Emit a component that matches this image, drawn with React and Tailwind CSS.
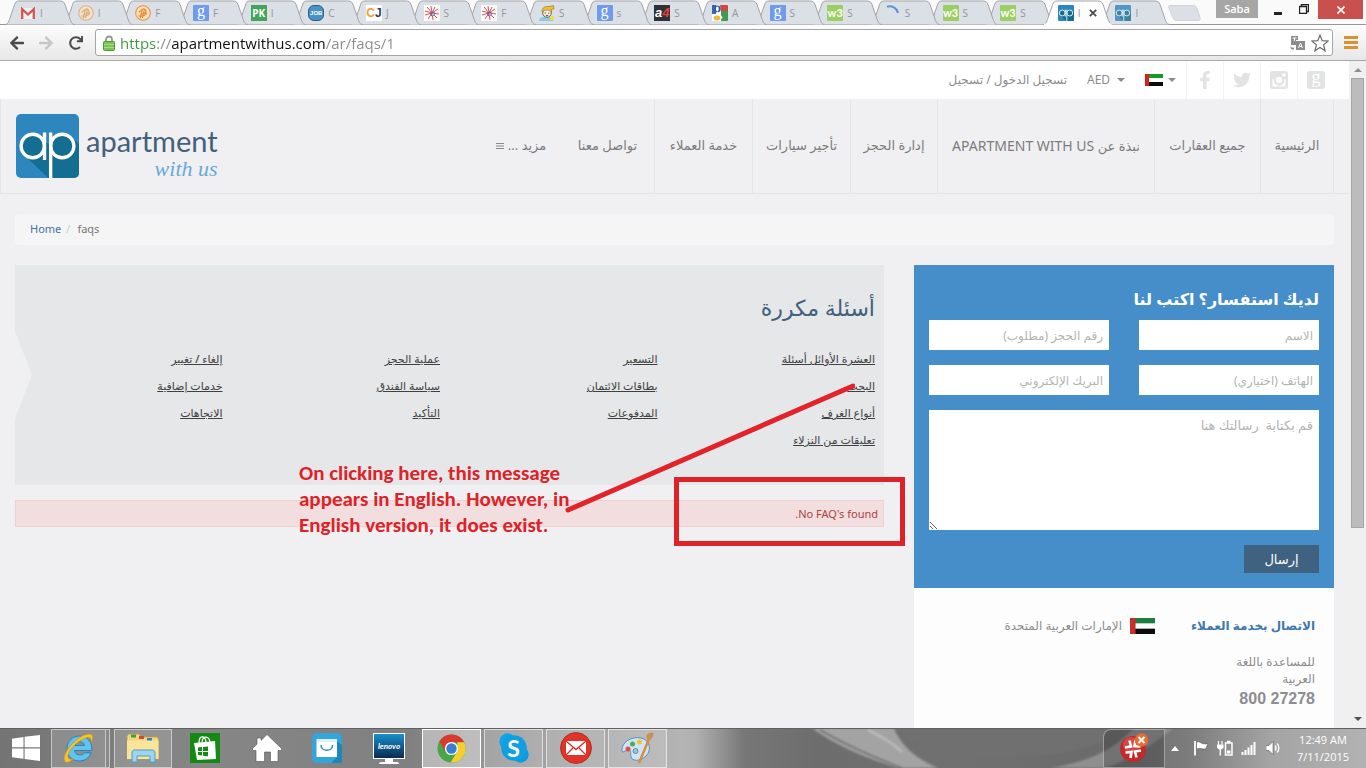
import React from "react";
import { FaFacebookF, FaTwitter, FaArrowLeft, FaArrowRight, FaRedo } from "react-icons/fa";

const sans = "font-['Noto_Sans','DejaVu_Sans',sans-serif]";

/* ---------- browser tabs ---------- */

function GoogleG() {
  return (
    <span className="block h-4 w-4 rounded-[1px] bg-[#6f9bea] text-center font-['Liberation_Serif',serif] text-[16px] leading-[11px] text-white">g</span>
  );
}
function Gmail() {
  return (
    <svg viewBox="0 0 16 16" className="h-4 w-4">
      <rect x="1" y="3" width="14" height="11" fill="#f2f2f2" />
      <path d="M2.2 14V4.2L8 9.5l5.8-5.3V14" fill="none" stroke="#d2574c" strokeWidth="2.3" />
    </svg>
  );
}
function Coin({ faded }) {
  return (
    <svg viewBox="0 0 16 16" className={faded ? "h-4 w-4 opacity-60" : "h-4 w-4"}>
      <circle cx="8" cy="8" r="7.3" fill="#fbe3c6" stroke="#e9953a" strokeWidth="1.1" />
      <path d="M5.300 13.300 7.400 4.200C11 3 12.600 7.600 8.600 9H5.200M3.600 7.200l5.200-3.800M7.400 12.800l2.200-9.200M3.400 10.800c3 1 6.400.2 8.600-2.800" fill="none" stroke="#e58a2c" strokeWidth="1.1" />
    </svg>
  );
}
function Pk() {
  return <span className="block h-4 w-4 bg-[#46a35a] text-center font-['Open_Sans',sans-serif] text-[10px] font-bold leading-4 text-white">PK</span>;
}
function Job() {
  return (
    <span className="block h-4 w-4 rounded-md border border-[#2b5f86] bg-[#4b92c4] text-center font-['Liberation_Sans',sans-serif] text-[6px] font-bold leading-[14px] text-white">JOB</span>
  );
}
function Cj() {
  return (
    <span className="block h-4 w-4 bg-white text-center font-['Liberation_Sans',sans-serif] text-[12px] font-bold leading-4 text-[#f0a032]">
      C<span className="text-[#2f3f63]">J</span>
    </span>
  );
}
function Burst() {
  return (
    <svg viewBox="0 0 16 16" className="h-4 w-4">
      <rect width="16" height="16" fill="#fdfafa" />
      <path d="M8 8 7 1M8 8l3-6M8 8l6-4M8 8l7 1M8 8l5 5M8 8l1 7M8 8l-4 6M8 8l-7 2M8 8 1 6M8 8 3 2" stroke="#e0555c" strokeWidth="1" />
      <circle cx="8.500" cy="9" r="2.400" fill="#8a5a86" />
      <circle cx="9" cy="9.500" r="1.200" fill="#9fc0dc" />
    </svg>
  );
}
function Kid() {
  return (
    <svg viewBox="0 0 16 16" className="h-4 w-4">
      <path d="M0 16c0-3 3-4.500 7-4.500s7 1.500 7 4.500z" fill="#8ccbe2" />
      <circle cx="8" cy="8" r="4.300" fill="#f7e9dc" stroke="#5b4a38" strokeWidth=".8" />
      <path d="M3 7C2.500 3 6 1 9 1.600l5.500-1L15 4l-3 .5c.6 1 .8 2 .6 2.600L10 5 5 5.500z" fill="#efc02f" stroke="#7c6327" strokeWidth=".5" />
      <path d="M6.200 7.500v1.200M9.800 7.500v1.200M6.800 10.600h2.400" stroke="#4a3a2b" strokeWidth=".9" />
      <path d="M12 11h3v4h-4z" fill="#f0e03a" />
    </svg>
  );
}
function A4() {
  return (
    <span className="block h-4 w-4 bg-[#2e3135] text-center font-['Liberation_Sans',sans-serif] text-[13px] font-bold italic leading-4 text-white">
      a<span className="text-[#e0403c]">4</span>
    </span>
  );
}
function GoogleColour() {
  return (
    <svg viewBox="0 0 16 16" className="h-4 w-4">
      <rect width="16" height="16" rx="1" fill="#fff" />
      <path d="M8 0h7a1 1 0 0 1 1 1v5H9z" fill="#d8443d" />
      <path d="M9 6h7v9a1 1 0 0 1-1 1H9z" fill="#3d9a57" />
      <path d="M0 0h4v9H0z" fill="#3a66b0" />
      <circle cx="5.300" cy="4" r="3.400" fill="#2f5ca8" />
      <ellipse cx="5.300" cy="4" rx="1.400" ry="2.400" fill="#fff" />
      <ellipse cx="5" cy="13" rx="3.400" ry="2.500" fill="#efb540" />
      <path d="M5 7.500c4 2 4 3 5 6" stroke="#fff" strokeWidth="1.600" fill="none" />
    </svg>
  );
}
function W3() {
  return <span className="block h-4 w-4 rounded-[1px] bg-[#9bcf63] text-center font-['Lato',sans-serif] text-[11px] font-bold leading-[15px] text-white">w3</span>;
}
function Spinner() {
  return (
    <svg viewBox="0 0 16 16" className="h-4 w-4">
      <path d="M2 1.800A8.500 8.500 0 0 1 13 8" fill="none" stroke="#5c93d3" strokeWidth="2" />
    </svg>
  );
}
function ApMark({ className }) {
  return (
    <svg viewBox="0 0 64 64" preserveAspectRatio="none" className={className}>
      <defs>
        <clipPath id="tile"><rect width="64" height="64" rx="5" /></clipPath>
      </defs>
      <g clipPath="url(#tile)">
        <rect width="64" height="64" fill="#2e86bf" />
        <path d="M8 41 33 64h31V30L54 21 34 30 16 24z" fill="#146e91" />
      </g>
      <circle cx="17" cy="32" r="11.800" fill="#146e91" stroke="#fff" strokeWidth="3.400" />
      <circle cx="47" cy="32" r="11.800" fill="#146e91" stroke="#fff" strokeWidth="3.400" />
      <path d="M29 18.500V46M35.200 18.500V64" stroke="#fff" strokeWidth="3.400" />
    </svg>
  );
}

const tabs = [
  { icon: <Gmail />, t: "I" },
  { icon: <Coin faded />, t: "I" },
  { icon: <Coin />, t: "F" },
  { icon: <GoogleG />, t: "F" },
  { icon: <Pk />, t: "I" },
  { icon: <Job />, t: "C" },
  { icon: <Cj />, t: "J" },
  { icon: <Burst />, t: "S" },
  { icon: <Burst />, t: "F" },
  { icon: <Kid />, t: "S" },
  { icon: <GoogleG />, t: "s" },
  { icon: <A4 />, t: "S" },
  { icon: <GoogleColour />, t: "A" },
  { icon: <GoogleG />, t: "S" },
  { icon: <W3 />, t: "S" },
  { icon: <Spinner />, t: "S" },
  { icon: <W3 />, t: "S" },
  { icon: <W3 />, t: "S" },
  { icon: <ApMark className="h-4 w-4" />, t: "I", active: true },
  { icon: <ApMark className="h-4 w-4 opacity-80" />, t: "I" },
];

function Tab({ tab, index }) {
  return (
    <div className="relative h-[25px] min-w-0 flex-1" style={{ zIndex: tab.active ? 40 : 30 - index }}>
      <svg viewBox="0 0 70 25" preserveAspectRatio="none" className="absolute inset-y-0 -left-2 h-[25px] w-[calc(100%+12px)]">
        <path
          d="M0 24.500C3 24.500 3.500 22 4.500 19.500L9.500 5C10.500 2 11.500 1 14 1H55C58 1 59.500 2 60.500 5L65.500 19.500C66.500 22 67 24.500 70 24.500"
          fill={tab.active ? "#fdfdfd" : "#dbdfe6"}
          stroke="#a2a4a8"
        />
        {tab.active && <path d="M1 24.500h68" stroke="#fdfdfd" strokeWidth="2" />}
      </svg>
      <div className="relative flex items-center pl-[7px] pt-[5px]">
        <span className="shrink-0">{tab.icon}</span>
        <span className="ml-1 min-w-[5px] font-['Open_Sans',sans-serif] text-[10px] leading-4 text-[#94969b]">{tab.t}</span>
        {tab.active && (
          <button aria-label="Close tab" className="ml-1.5">
            <svg viewBox="0 0 8 8" className="h-2 w-2"><path d="m.8.8 6.400 6.400M7.200.8.8 7.200" stroke="#4a4a4a" strokeWidth="1.800" /></svg>
          </button>
        )}
      </div>
    </div>
  );
}

function TabStrip() {
  return (
    <div className="flex h-[25px] shrink-0 border-b border-[#979797] bg-[#fafafa]">
      <div className="flex min-w-0 flex-1 pl-[13px]">
        {tabs.map((t, i) => <Tab key={i} tab={t} index={i} />)}
      </div>
      <div className="flex w-[200px] shrink-0 items-start">
        <button aria-label="New tab" className="ml-0.5 mt-[5px]">
          <svg viewBox="0 0 33 16" className="h-4 w-[33px]"><path d="M2 .5h23c2 0 3 .5 4 3l3 9c.6 2 0 3-2 3H9c-2 0-3-.5-4-3L1 3.500C.3 1.500.6.500 2 .500z" fill="#dcdfe5" stroke="#cfd2d7" /></svg>
        </button>
        <button className="ml-[15px] h-[18px] w-[42px] bg-[#a6a6a6] font-['Open_Sans',sans-serif] text-[11px] font-semibold leading-[18px] text-white">Saba</button>
        <button aria-label="Minimize" className="ml-4 h-[18px] w-2 pt-2"><span className="block h-[3px] bg-[#222]" /></button>
        <button aria-label="Restore" className="ml-[17px] h-[18px] w-2.5">
          <svg viewBox="0 0 10 10" className="h-2.5 w-2.5"><path d="M.5 2.500h7v7h-7zM2.500 2.500v-2h7v7h-2" fill="none" stroke="#222" strokeWidth="1.300" /></svg>
        </button>
        <button aria-label="Close window" className="ml-[9px] flex h-[19px] w-[45px] items-center justify-center bg-[#c8504f]">
          <svg viewBox="0 0 8 8" className="h-2 w-2"><path d="m.5.5 7 7M7.500.5l-7 7" stroke="#fff" strokeWidth="1.600" /></svg>
        </button>
      </div>
    </div>
  );
}

function Toolbar() {
  return (
    <div className="flex h-9 shrink-0 items-center border-b border-[#a8a8a8] bg-gradient-to-b from-[#fdfdfd] to-[#e7e7e7] pl-[9px] pr-2">
      <button aria-label="Back"><FaArrowLeft className="h-4 w-4 text-[#4a4a4a]" /></button>
      <button aria-label="Forward" className="ml-[13px]"><FaArrowRight className="h-4 w-4 text-[#c6c6c6]" /></button>
      <button aria-label="Reload" className="ml-[15px]"><FaRedo className="h-3.5 w-3.5 text-[#4a4a4a]" /></button>
      <div className="ml-3 flex h-[27px] min-w-0 flex-1 items-center rounded-[3px] border border-[#a5a5a5] bg-white pl-[7px] pr-[3px]">
        <svg viewBox="0 0 12 16" className="h-4 w-3 shrink-0">
          <path d="M3 8V4.500a3 3 0 0 1 6 0V8" fill="none" stroke="#8f9a8a" strokeWidth="1.800" />
          <rect x=".5" y="6.500" width="11" height="9" rx="1" fill="#7cc355" stroke="#4e9a33" />
          <path d="M1 9.500h10M1 12.500h10" stroke="#a5dc83" />
        </svg>
        <input
          aria-label="Address"
          defaultValue="https://apartmentwithus.com/ar/faqs/1"
          className="ml-[5px] min-w-0 flex-1 bg-[linear-gradient(90deg,#3c963f_0_37px,#8a8a8a_37px_52px,#111_52px_205px,#8a8a8a_205px)] bg-clip-text font-['Open_Sans',sans-serif] text-[15px] leading-6 text-transparent outline-none"
        />
        <svg viewBox="0 0 15 14" className="h-3.5 w-[15px] shrink-0">
          <path d="M1 0h7v4H6v5H1z" fill="#8d8d8d" />
          <rect x="6" y="5" width="9" height="9" fill="#8d8d8d" />
          <path d="m8.500 12 2-5 2 5M9.200 10.500h2.600" stroke="#fff" fill="none" />
          <path d="M2.500 2h4M4.500 2v3" stroke="#fff" />
          <path d="M1 10.500v2h3M2.500 11.500l1.500 1-1.500 1.200" stroke="#8d8d8d" fill="none" />
        </svg>
        <svg viewBox="0 0 18 18" className="ml-1.5 h-[18px] w-[18px] shrink-0">
          <path d="m9 1 2.200 5.600 6 .4-4.600 3.900 1.500 5.900L9 13.500l-5.100 3.300 1.500-5.900L.8 7l6-.4z" fill="#fff" stroke="#6b6b6b" strokeWidth="1.200" />
        </svg>
      </div>
      <button aria-label="Menu" className="ml-[11px] flex flex-col gap-0.5">
        <span className="h-[3px] w-3.5 bg-[#d99232]" />
        <span className="h-[3px] w-3.5 bg-[#d99232]" />
        <span className="h-[3px] w-3.5 bg-[#d99232]" />
      </button>
    </div>
  );
}

/* ---------- site ---------- */

function Flag({ className, red = "#dd1c1c", green = "#169a22" }) {
  return (
    <svg viewBox="0 0 18 12" preserveAspectRatio="none" className={className}>
      <rect width="18" height="12" fill="#fff" />
      <rect width="18" height="4" fill={green} />
      <rect y="8" width="18" height="4" fill="#0c0c0c" />
      <rect width="4" height="12" fill={red} />
    </svg>
  );
}
function Caret() {
  return <span className="block h-0 w-0 border-x-4 border-t-4 border-x-transparent border-t-[#8c8c8c]" />;
}
function Social({ label, children }) {
  return (
    <a href="#" aria-label={label} className="flex h-[37px] w-[37px] items-center justify-center border-l border-[#f3f3f4] text-[#e2e3e5]">{children}</a>
  );
}

function TopBar() {
  return (
    <div className="flex h-[38px] items-center justify-end bg-white pr-[15px] text-[12px] text-[#8c8c8c]">
      <a href="#" dir="rtl" className="text-[12px]">تسجيل الدخول / تسجيل</a>
      <label className="ml-5 flex items-center">
        <select aria-label="Currency" className="w-[30px] appearance-none bg-transparent text-[12px] outline-none"><option>AED</option></select>
        <Caret />
      </label>
      <button aria-label="Language" className="ml-5 mr-2.5 flex items-center gap-[5px]">
        <Flag className="h-3 w-[18px]" />
        <Caret />
      </button>
      <Social label="Facebook"><FaFacebookF className="h-[18px] w-[18px]" /></Social>
      <Social label="Twitter"><FaTwitter className="h-[18px] w-[18px]" /></Social>
      <Social label="Instagram">
        <svg viewBox="0 0 18 18" className="h-[18px] w-[18px]">
          <rect width="18" height="18" rx="3" fill="#e2e3e5" />
          <path d="M2.500 8v7.500h13V8H14a5.200 5.200 0 1 1-10 0z" fill="#fff" />
          <circle cx="9" cy="9" r="3.400" fill="#fff" />
          <rect x="12.500" y="2.500" width="3" height="3" fill="#fff" />
          <circle cx="9" cy="9" r="4.300" fill="none" stroke="#e2e3e5" strokeWidth="2" />
        </svg>
      </Social>
      <Social label="Google">
        <span className="block h-[18px] w-[18px] rounded-[3px] bg-[#e2e3e5] text-center font-['Liberation_Serif',serif] text-[18px] leading-[12px] text-white">g</span>
      </Social>
    </div>
  );
}

function NavItem({ width, border = true, children }) {
  return (
    <a href="#" className={`flex h-full items-center justify-center whitespace-nowrap ${border ? "border-l border-[#e4e5e7]" : ""} ${width}`}>{children}</a>
  );
}

function Header() {
  return (
    <header className="flex h-[95px] items-stretch justify-between border-b border-l border-[#e4e5e7] pl-[15px] pr-[15px]">
      <a href="#" aria-label="apartment with us" className="flex items-start pt-[15px]">
        <ApMark className="h-16 w-[63px]" />
        <span className="ml-[7px] flex flex-col items-end pt-[11px]">
          <span className="font-['Lato',sans-serif] text-[29px] leading-8 text-[#43607d]">apartment</span>
          <span className="font-['Liberation_Serif',serif] text-[22px] italic leading-6 text-[#6aa8d8]">with us</span>
        </span>
      </a>
      <nav dir="rtl" className="flex border-r border-[#e4e5e7] text-[13px] text-[#7c7c7c]">
        <NavItem width="w-[73px]">الرئيسية</NavItem>
        <NavItem width="w-[106px]">جميع العقارات</NavItem>
        <NavItem width="w-[217px]">
          <span>نبذة عن <span className="text-[14px]">APARTMENT WITH US</span></span>
        </NavItem>
        <NavItem width="w-[87px]">إدارة الحجز</NavItem>
        <NavItem width="w-[98px]">تأجير سيارات</NavItem>
        <NavItem width="w-[98px]">خدمة العملاء</NavItem>
        <NavItem width="w-[93px]" border={false}>تواصل معنا</NavItem>
        <NavItem width="w-[80px]" border={false}>
          مزيد ...
          <svg viewBox="0 0 8 7" className="mr-1 h-[7px] w-2"><path d="M0 .5h8M0 3h8M0 5.500h8" stroke="#8a8a8a" /></svg>
        </NavItem>
      </nav>
    </header>
  );
}

const faqColumns = [
  ["العشرة الأوائل أسئلة", "البحث", "أنواع الغرف", "تعليقات من النزلاء"],
  ["التسعير", "بطاقات الائتمان", "المدفوعات"],
  ["عملية الحجز", "سياسة الفندق", "التأكيد"],
  ["إلغاء / تغيير", "خدمات إضافية", "الاتجاهات"],
];

function Faq() {
  return (
    <section className="min-w-0 flex-1">
      <div dir="rtl" className="relative h-[220px] bg-[#e5e7e8] pr-[9px] pt-[22px]">
        <svg viewBox="0 0 17 88" className="absolute left-0 top-[66px] h-[88px] w-[17px]"><path d="M0 0 17 44 0 88z" fill="#f0f0f2" /></svg>
        <h1 className="text-[22px] leading-10 text-[#3f607f]">أسئلة مكررة</h1>
        <div className="-ml-2.5 mt-[18px] grid grid-cols-4">
          {faqColumns.map((col, i) => (
            <ul key={i}>
              {col.map((q) => (
                <li key={q} className="h-[27px] text-[11px] leading-[27px] text-[#404040]">
                  <a href="#" className="font-medium underline">{q}</a>
                </li>
              ))}
            </ul>
          ))}
        </div>
      </div>
      <div role="alert" dir="rtl" className="mt-[15px] h-[27px] border border-[#efd0d4] bg-[#f2dede] pr-[5px] text-[11px] leading-[25px] text-[#a94442]">
        No FAQ's found.
      </div>
    </section>
  );
}

function Contact() {
  const field = "h-[30px] w-full min-w-0 bg-white px-1.5 text-[12px] outline-none placeholder:text-[#b4b4b4]";
  return (
    <aside dir="rtl" className="flex w-[420px] shrink-0 flex-col">
      <form className="bg-[#468ec9] px-[15px] pb-[15px] pt-5">
        <h2 className="h-[35px] text-[16px] font-bold leading-[28px] text-white">لديك استفسار؟ اكتب لنا</h2>
        <div className="grid grid-cols-2 gap-x-[30px] gap-y-[15px]">
          <input aria-label="الاسم" placeholder="الاسم" className={field} />
          <input aria-label="رقم الحجز" placeholder="رقم الحجز (مطلوب)" className={field} />
          <input aria-label="الهاتف" placeholder="الهاتف (اختياري)" className={field} />
          <input aria-label="البريد" placeholder="البريك الإلكتروني" className={field} />
          <textarea
            aria-label="الرسالة"
            placeholder="قم بكتابة  رسالتك هنا"
            className="col-span-2 block h-[120px] w-full resize-y bg-white px-1.5 py-1.5 text-[13px] leading-[18px] outline-none placeholder:text-[#b4b4b4]"
          />
        </div>
        <button type="button" className="mt-[15px] block h-7 w-[75px] bg-[#3f6280] text-[13px] leading-7 text-white">إرسال</button>
      </form>
      <div className="flex-1 bg-[#fdfdfd] pl-4 pr-[19px] pt-[27px]">
        <div className="flex items-center text-[#8c8c8c]">
          <h3 className="w-[160px] text-[12px] font-bold leading-[22px] text-[#3d78b0]">الاتصال بخدمة العملاء</h3>
          <Flag className="h-4 w-[25px]" red="#c9302c" green="#1e7d40" />
          <span className="mr-2 text-[12px] font-medium">الإمارات العربية المتحدة</span>
        </div>
        <p className="mt-4 w-[90px] text-[12px] leading-[17px] text-[#8c8c8c]">للمساعدة باللغة العربية</p>
        <p dir="ltr" className="mt-px text-right font-['Liberation_Sans',sans-serif] text-[16px] font-bold leading-[22px] text-[#8c8e92]">800 27278</p>
      </div>
    </aside>
  );
}

function Annotations() {
  return (
    <>
      <p className="absolute left-[299px] top-[399px] whitespace-pre font-['Carlito','Lato',sans-serif] text-[21px] font-bold leading-[26px] text-[#dd2228]">
        {"On clicking here, this message\nappears in English. However, in\nEnglish version, it does exist."}
      </p>
      <svg viewBox="0 0 290 130" className="pointer-events-none absolute left-[565px] top-[322px] h-[130px] w-[290px]">
        <path d="M3 127 288 3" stroke="#e2232a" strokeWidth="5" strokeLinecap="round" />
      </svg>
      <div className="pointer-events-none absolute left-[674px] top-[416px] h-[69px] w-[231px] border-[5px] border-[#dd2228]" />
    </>
  );
}

function Scrollbar() {
  return (
    <div className="flex w-[17px] shrink-0 flex-col items-center bg-[#f0f0f1]">
      <span className="mb-[5px] mt-[7px] block h-0 w-0 border-x-4 border-b-4 border-x-transparent border-b-[#8f8f8f]" />
      <span className="mt-px h-[450px] w-[13px] border border-[#a6a6a6] bg-[#bcbcbc]" />
      <span className="mb-[7px] mt-auto block h-0 w-0 border-x-4 border-t-4 border-x-transparent border-t-[#505050]" />
    </div>
  );
}

function Site() {
  return (
    <div className={`relative flex min-h-0 flex-1 overflow-hidden bg-[#f0f0f2] ${sans}`}>
      <div className="flex min-w-0 flex-1 flex-col">
        <TopBar />
        <Header />
        <div className="flex min-h-0 flex-1 flex-col px-[15px] pt-5">
          <ol className="flex h-[31px] shrink-0 items-center rounded bg-[#f5f5f5] px-[15px] text-[11px] text-[#777]">
            <li><a href="#" className="text-[#3f74a5]">Home</a></li>
            <li className="px-[5px] text-[#ccc]">/</li>
            <li className="pl-0.5">faqs</li>
          </ol>
          <div className="mt-5 flex min-h-0 flex-1 gap-[30px]">
            <Faq />
            <Contact />
          </div>
        </div>
      </div>
      <Scrollbar />
      <Annotations />
    </div>
  );
}

/* ---------- taskbar ---------- */

function Wallpaper() {
  return (
    <svg viewBox="0 0 1366 40" preserveAspectRatio="none" className="absolute inset-0 h-full w-full">
      <defs>
        <linearGradient id="wp" x1="0" x2="1">
          <stop offset="0" stopColor="#747474" /><stop offset=".15" stopColor="#868686" /><stop offset=".3" stopColor="#808080" />
          <stop offset=".34" stopColor="#909090" /><stop offset=".4" stopColor="#a2a2a2" /><stop offset=".5" stopColor="#b4b4b4" /><stop offset=".51" stopColor="#b0b0b0" />
          <stop offset=".545" stopColor="#777" /><stop offset=".6" stopColor="#6d6d6d" /><stop offset=".7" stopColor="#707070" />
          <stop offset=".8" stopColor="#6b6b6b" /><stop offset=".87" stopColor="#7c7c7c" /><stop offset=".93" stopColor="#a4a4a4" /><stop offset="1" stopColor="#b2b2b2" />
        </linearGradient>
        <filter id="soft"><feGaussianBlur stdDeviation="1.200" /></filter>
      </defs>
      <rect width="1366" height="40" fill="url(#wp)" />
      <g filter="url(#soft)">
        <path d="M812 0h82c6 16 20 30 44 40h-40C860 28 834 16 812 0z" fill="#a3a3a3" />
        <path d="M820 2c24 14 50 26 82 38" stroke="#6a6a6a" strokeWidth="1.500" fill="none" />
        <path d="M868 2c12 6 24 12 34 22" stroke="#c0c0c0" strokeWidth="2" fill="none" />
        <path d="M1050 40c40-6 66-20 84-40h40c-20 14-40 32-70 40z" fill="#8f8f8f" />
        <path d="M896 0h230c-20 16-56 28-116 30-60 0-96-12-114-30z" fill="#6f6f6f" />
      </g>
      <path d="M0 .5h1366" stroke="#606060" />
    </svg>
  );
}

function TaskButton({ label, className, children }) {
  return <button aria-label={label} className={`flex h-[39px] shrink-0 items-center justify-center ${className}`}>{children}</button>;
}

function Taskbar() {
  return (
    <footer className="relative h-10 shrink-0 overflow-hidden bg-[#777]">
      <Wallpaper />
      <div className="relative flex h-full items-center">
        <TaskButton label="Start" className="w-[51px]">
          <svg viewBox="0 0 28 26" className="h-[26px] w-7"><path d="M0 3.700 11.500 2v10.300H0zM12.600 1.800 28 0v12.300H12.600zM0 13.500h11.500v10.200L0 22.200zM12.600 13.500H28V26l-15.400-2z" fill="#fff" /></svg>
        </TaskButton>
        <TaskButton label="Internet Explorer" className="w-[55px] border border-white/50 bg-white/15">
          <svg viewBox="0 0 32 32" className="h-8 w-8">
            <path d="M16.500 4C24 4 29.500 10 28.800 18.500H11.500c.5 5 7.500 6 10 2.300h6.700C26 26.500 21.500 29 16 29 9 29 4 23.500 4 16.500S9.500 4 16.500 4zM11.500 13.500h10C21 8.500 12 8.500 11.500 13.500z" fill="#62c3f0" stroke="#2484bd" strokeWidth="1" />
            <path d="M2 29.500C-3 22 16 1 27 2c4 .8 3 6 1 9 .8-4.500-.8-6.500-5-5C14 9 4.500 19 5 25c.3 2.500 3 2.800 6 1.500-4 3.500-7.500 5-9 3z" fill="#f4c330" stroke="#c88d14" strokeWidth=".6" />
          </svg>
        </TaskButton>
        <span className="h-[39px] w-1 border border-l-0 border-white/50 bg-white/10" />
        <TaskButton label="File Explorer" className="ml-1 w-[58px] border border-white/50 bg-white/15">
          <svg viewBox="0 0 32 30" className="h-[30px] w-8">
            <path d="M0 3 2 1h10l2 3h16l1.500 2v20H0z" fill="#f3d67a" stroke="#c69e3a" strokeWidth=".8" />
            <path d="M4 1.500h5v3H4z" fill="#3f9a4c" /><path d="M12 3h5v3h-5z" fill="#c94b3a" /><path d="M20 5h5v3h-5z" fill="#3c7cc8" />
            <path d="M0 7.500h31.500v18.500H0z" fill="#f8e59a" />
            <path d="M5 29V18.500l2-1.500h19l2 1.500V29h-5v-6H10v6z" fill="#9fd4ee" stroke="#4a9fcb" />
          </svg>
        </TaskButton>
        <TaskButton label="Store" className="ml-[18px]">
          <svg viewBox="0 0 30 30" className="h-[30px] w-[30px]">
            <rect width="30" height="30" fill="#138a12" />
            <path d="m4 10 21-2 1 18-19 1z" fill="#fff" />
            <path d="M9 10c0-8 6-8 7-1M12 9c1-7 7-6 8 0" fill="none" stroke="#fff" strokeWidth="1.300" />
            <path d="m8 14.500 4-.5v4H8zM13 13.900l5-.5V18h-5zM8 19h4v3.500L8 22zM13 19h5v4.300l-5-.5z" fill="#138a12" />
          </svg>
        </TaskButton>
        <TaskButton label="Home" className="ml-[31px]">
          <svg viewBox="0 0 32 28" className="h-7 w-8"><path d="M16 .5 31 15l-1.500 1.500H27V27.500h-7.500V18h-6v9.500H5V16.500H2.500L1 15l5-4.800V4h4v2.400z" fill="#fff" stroke="#555" strokeWidth=".6" /></svg>
        </TaskButton>
        <TaskButton label="Shop" className="ml-[29px]">
          <svg viewBox="0 0 30 30" className="h-[30px] w-[30px]">
            <rect width="30" height="30" rx="5" fill="#32a5dc" />
            <path d="M25 8v16L19 30H30V12z" fill="#1c86bd" />
            <path d="M4.500 6h20.500v3H4.500z" fill="#dff2fa" /><path d="M4.500 9H25v15H4.500z" fill="#fff" />
            <path d="M9 12c0 7 11.500 7 11.500 0" fill="none" stroke="#2b8fc7" strokeWidth="1.500" />
          </svg>
        </TaskButton>
        <TaskButton label="Lenovo" className="ml-[31px]">
          <span className="flex flex-col items-center">
            <span className="block h-[26px] w-8 border border-white bg-gradient-to-b from-[#1792cc] to-[#0a2b52] text-center font-['Lato',sans-serif] text-[8px] font-bold italic leading-[24px] text-white">lenovo</span>
            <span className="h-[3px] w-2 bg-white" />
            <span className="h-0.5 w-5 rounded-t bg-white" />
          </span>
        </TaskButton>
        <TaskButton label="Chrome" className="ml-[17px] w-[59px] border border-white bg-white/40">
          <svg viewBox="0 0 30 30" className="h-[29px] w-[29px]">
            <circle cx="15" cy="15" r="14.500" fill="#49a545" />
            <path d="M15 .5A14.500 14.500 0 0 1 28 8.500H15L9 19 2.500 7.500A14.500 14.500 0 0 1 15 .5z" fill="#d93a2c" />
            <path d="M28 8.500A14.500 14.500 0 0 1 14 29.500L21 18V8.500z" fill="#f6cf2e" />
            <circle cx="15" cy="15" r="6.800" fill="#fff" /><circle cx="15" cy="15" r="5.400" fill="#3b7fd0" />
          </svg>
        </TaskButton>
        <TaskButton label="Skype" className="ml-[3px] w-[59px] border border-white/60 bg-white/15">
          <span className="relative block h-[30px] w-[30px]">
            <svg viewBox="0 0 30 30" className="absolute inset-0 h-[30px] w-[30px]"><circle cx="8.500" cy="8.500" r="8.200" fill="#12a5e6" /><circle cx="21.500" cy="21.500" r="8.200" fill="#0c9ada" /><circle cx="15" cy="15" r="12.800" fill="#10a0e2" /></svg>
            <span className="relative block text-center font-['Lato',sans-serif] text-[23px] font-bold leading-[30px] text-white">S</span>
          </span>
        </TaskButton>
        <TaskButton label="Mail" className="ml-[3px] w-[59px] border border-white/60 bg-white/15">
          <svg viewBox="0 0 32 32" className="h-8 w-8">
            <circle cx="16" cy="16" r="15.500" fill="#e23328" stroke="#9c2b24" strokeWidth=".8" />
            <path d="M6 9h20v14H6z" fill="#fff" /><path d="m6 9 10 8.500L26 9M6 23l7.500-7.500M26 23l-7.500-7.500" fill="none" stroke="#e23328" strokeWidth="1.400" />
          </svg>
        </TaskButton>
        <TaskButton label="Paint" className="ml-[3px] w-[59px] border border-white/60 bg-white/15">
          <svg viewBox="0 0 34 32" className="h-8 w-[34px]">
            <path d="M1 19C0 10 11 4 20 6s11 12 5 18-14 5-15 1 1-6-2-7-6 4-7 1z" fill="#cfe4f4" stroke="#5b8db9" />
            <circle cx="7" cy="17" r="2.500" fill="#dc4e46" /><circle cx="11.500" cy="12" r="2.500" fill="#4bad4b" /><circle cx="18.500" cy="10" r="2.500" fill="#efc23a" /><circle cx="14.500" cy="19" r="2.500" fill="#a9bfd0" stroke="#5b8db9" />
            <path d="M18 31 28 7" stroke="#d98c3c" strokeWidth="2.500" /><path d="M25.500 6c-1-3 2-6 7-5 0 4-2 7-5 7z" fill="#c99150" />
          </svg>
        </TaskButton>
        <div className="ml-auto flex h-full items-center">
          <TaskButton label="Antivirus" className="w-[62px] rounded-tl-lg border border-white/40 bg-black/20">
            <svg viewBox="0 0 30 30" className="h-[30px] w-[30px]">
              <circle cx="14" cy="16" r="13" fill="#c2292b" /><circle cx="12" cy="12" r="8" fill="#e4665f" opacity=".5" />
              <path d="m10.500 7.500 1.500 6-6 1M21.500 13.500l-6-.5 1-6M17.500 24.500l-1.500-6 6-1M6.500 19.500l6-.5-1 6" fill="none" stroke="#fff" strokeWidth="2.600" />
              <circle cx="22.500" cy="7" r="6.800" fill="#ea6b30" /><path d="m19.500 4 6 6m0-6-6 6" stroke="#fff" strokeWidth="2" />
            </svg>
          </TaskButton>
          <svg viewBox="0 0 8 5" className="ml-[6px] h-[5px] w-2"><path d="M4 0l4 5H0z" fill="#fff" /></svg>
          <svg viewBox="0 0 16 16" className="ml-3.5 h-4 w-4"><path d="M2 1v14.500" stroke="#fff" strokeWidth="1.800" /><path d="M3.500 2C7 1 8 3.500 10 3.800l5 .2-2.500 5c-3 .5-5-1.500-9 0z" fill="#fff" stroke="#444" strokeWidth=".5" /></svg>
          <svg viewBox="0 0 16 16" className="ml-2 h-4 w-4"><path d="M8.500 3H15v12H8.500zM10 1.500h3.500" fill="none" stroke="#fff" strokeWidth="1.500" /><path d="M10 10.500h3.500v3H10z" fill="#fff" /><path d="M1.500 1v3.500M5 1v3.500" stroke="#fff" strokeWidth="1.200" /><path d="M0 4.500h6.500V8L4 9.500v6H2.600v-6L0 8z" fill="#fff" /></svg>
          <svg viewBox="0 0 16 14" className="ml-2 h-3.5 w-4"><path d="M1.500 14v-3M4.500 14v-5M7.500 14V6.500M10.500 14V4M13.500 14V1" stroke="#fff" strokeWidth="2" /></svg>
          <svg viewBox="0 0 14 14" className="ml-[9px] h-3.5 w-3.5"><path d="M0 4.500h3L7 .5v13l-4-4H0z" fill="#fff" stroke="#444" strokeWidth=".5" /><path d="M9 4.500c1.300 1.500 1.300 3.500 0 5M11 2.500c2.500 2.500 2.500 6.500 0 9" fill="none" stroke="#fff" strokeWidth="1.300" /></svg>
          <div className="w-[86px] text-center font-['Open_Sans',sans-serif] text-[11px] leading-[17px] text-white">
            <div>12:49 AM</div>
            <div>7/11/2015</div>
          </div>
        </div>
      </div>
    </footer>
  );
}

export default function App() {
  return (
    <div className="flex h-screen min-h-[480px] flex-col overflow-hidden bg-[#f0f0f2]">
      <TabStrip />
      <Toolbar />
      <Site />
      <Taskbar />
    </div>
  );
}
